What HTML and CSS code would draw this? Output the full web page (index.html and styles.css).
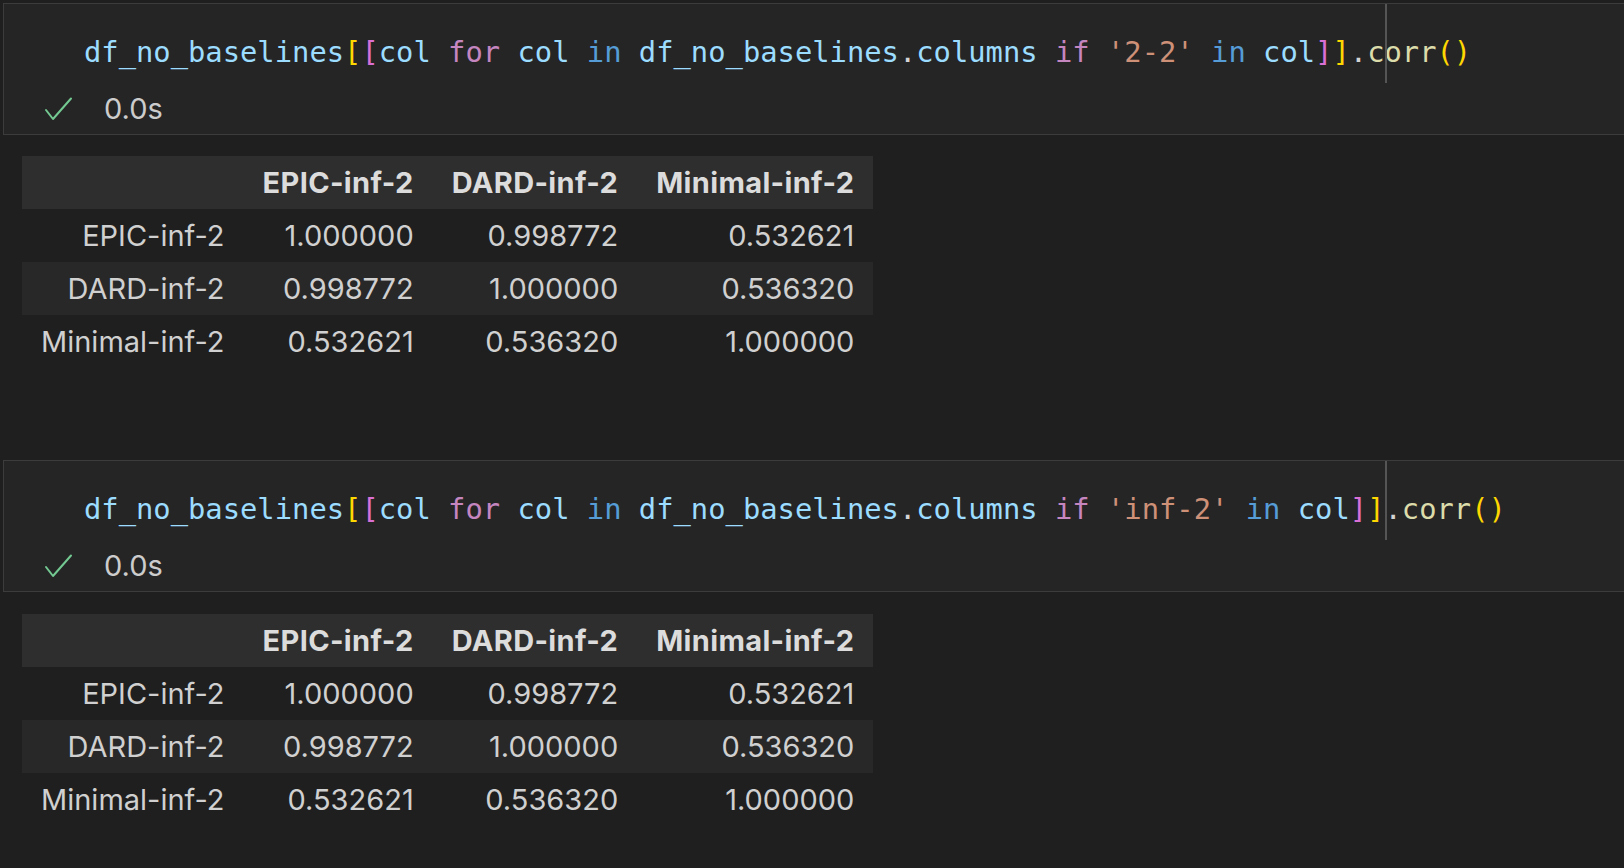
FILE: index.html
```html
<!DOCTYPE html>
<html>
<head>
<meta charset="utf-8">
<link rel="stylesheet" href="styles.css">
</head>
<body>
<div class="notebook">
  <div class="cell">
    <div class="editor">
      <div class="code"><span class="v">df_no_baselines</span><span class="b1">[</span><span class="b2">[</span><span class="v">col</span> <span class="k">for</span> <span class="v">col</span> <span class="op">in</span> <span class="v">df_no_baselines</span><span class="p">.</span><span class="v">columns</span> <span class="k">if</span> <span class="s">'2-2'</span> <span class="op">in</span> <span class="v">col</span><span class="b2">]</span><span class="b1">]</span><span class="p">.</span><span class="f">corr</span><span class="b1">()</span></div>
      <div class="ruler"></div>
    </div>
    <div class="status">
      <svg class="check" width="29" height="24" viewBox="0 0 29 24"><polyline points="2,13 9,22 27,1.5" fill="none" stroke="#73c991" stroke-width="2" stroke-linecap="round" stroke-linejoin="round"/></svg>
      <span class="time">0.0s</span>
    </div>
  </div>
  <div class="output">
    <table class="df">
      <thead>
        <tr><th></th><th>EPIC-inf-2</th><th>DARD-inf-2</th><th>Minimal-inf-2</th></tr>
      </thead>
      <tbody>
        <tr><th>EPIC-inf-2</th><td>1.000000</td><td>0.998772</td><td>0.532621</td></tr>
        <tr><th>DARD-inf-2</th><td>0.998772</td><td>1.000000</td><td>0.536320</td></tr>
        <tr><th>Minimal-inf-2</th><td>0.532621</td><td>0.536320</td><td>1.000000</td></tr>
      </tbody>
    </table>
  </div>

  <div class="cell">
    <div class="editor">
      <div class="code"><span class="v">df_no_baselines</span><span class="b1">[</span><span class="b2">[</span><span class="v">col</span> <span class="k">for</span> <span class="v">col</span> <span class="op">in</span> <span class="v">df_no_baselines</span><span class="p">.</span><span class="v">columns</span> <span class="k">if</span> <span class="s">'inf-2'</span> <span class="op">in</span> <span class="v">col</span><span class="b2">]</span><span class="b1">]</span><span class="p">.</span><span class="f">corr</span><span class="b1">()</span></div>
      <div class="ruler"></div>
    </div>
    <div class="status">
      <svg class="check" width="29" height="24" viewBox="0 0 29 24"><polyline points="2,13 9,22 27,1.5" fill="none" stroke="#73c991" stroke-width="2" stroke-linecap="round" stroke-linejoin="round"/></svg>
      <span class="time">0.0s</span>
    </div>
  </div>
  <div class="output last">
    <table class="df">
      <thead>
        <tr><th></th><th>EPIC-inf-2</th><th>DARD-inf-2</th><th>Minimal-inf-2</th></tr>
      </thead>
      <tbody>
        <tr><th>EPIC-inf-2</th><td>1.000000</td><td>0.998772</td><td>0.532621</td></tr>
        <tr><th>DARD-inf-2</th><td>0.998772</td><td>1.000000</td><td>0.536320</td></tr>
        <tr><th>Minimal-inf-2</th><td>0.532621</td><td>0.536320</td><td>1.000000</td></tr>
      </tbody>
    </table>
  </div>
</div>
</body>
</html>
```

FILE: styles.css
```css
html, body {
  margin: 0;
  padding: 0;
  width: 1624px;
  height: 868px;
  overflow: hidden;
  background: #1f1f1f;
}

.notebook {
  padding-top: 3px;
  padding-left: 3px;
  display: flex;
  flex-direction: column;
}

.cell {
  border: 1px solid #3c3c3c;
  border-right: 0;
  background: #252526;
  height: 130px;
  display: flex;
  flex-direction: column;
}

.editor {
  position: relative;
  height: 79px;
  box-sizing: border-box;
  padding-top: 28px;
  padding-left: 80px;
}

.code {
  font-family: "DejaVu Sans Mono", monospace;
  font-size: 28.8px;
  line-height: 40px;
  white-space: pre;
  color: #d4d4d4;
}

.v { color: #9cdcfe; }
.k { color: #c586c0; }
.op { color: #569cd6; }
.s { color: #ce9178; }
.p { color: #d4d4d4; }
.f { color: #dcdcaa; }
.b1 { color: #ffd700; }
.b2 { color: #da70d6; }

.ruler {
  position: absolute;
  left: 1381px;
  top: 0;
  width: 2px;
  height: 79px;
  background: #555555;
}

.status {
  height: 51px;
  display: flex;
  align-items: center;
  padding-left: 40px;
}

.check {
  display: block;
  margin-top: 1px;
}

.time {
  margin-left: 31px;
  font-family: Inter, "Liberation Sans", sans-serif;
  font-size: 29px;
  line-height: 40px;
  color: #cccccc;
}

.output {
  padding-top: 21px;
  padding-left: 19px;
  padding-bottom: 92px;
}

.output.last {
  padding-top: 22px;
  padding-bottom: 0;
}

.df {
  border-collapse: collapse;
  border-spacing: 0;
  font-family: Inter, "Liberation Sans", sans-serif;
  font-size: 29px;
  color: #d0d0d0;
}

.df th, .df td {
  height: 53px;
  padding: 0 19px;
  text-align: right;
  font-weight: normal;
  white-space: nowrap;
}

.df thead tr {
  background: #2e2e2e;
}

.df thead th {
  font-weight: bold;
  letter-spacing: 0.35px;
  color: #dcdcdc;
}

.df tbody tr:nth-child(even) {
  background: #282828;
}
```
